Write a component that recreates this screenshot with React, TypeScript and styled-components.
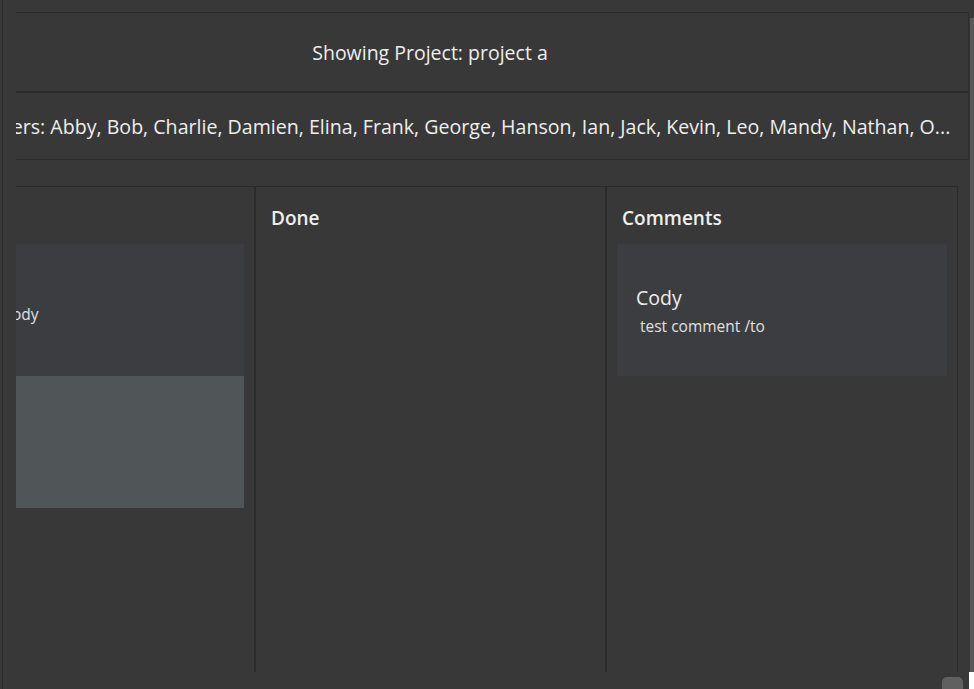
import { useLayoutEffect, useRef } from "react";
import styled, { createGlobalStyle } from "styled-components";

const GlobalStyle = createGlobalStyle`
    html, body {
        margin: 0;
        padding: 0;
        background-color: #383838;
    }
    body {
        font-family: "Open Sans", "Noto Sans", sans-serif;
        color: #eeeeee;
    }
`;

const Window = styled.div`
    width: 974px;
    height: 689px;
    display: grid;
    grid-template-columns: 969px 5px;
    grid-template-rows: 672px 17px;
    background-color: #383838;
    overflow: hidden;
`;

const MainPane = styled.div`
    margin-left: 2px;
    border-left: 1px solid #2b2b2b;
    padding-left: 13px;
    display: flex;
    flex-direction: column;
    min-width: 0;
`;

const ScrollView = styled.div`
    flex: 1;
    overflow: hidden;
    padding-top: 12px;
`;

const Content = styled.div`
    width: 1078px;
    display: flex;
    flex-direction: column;
`;

const ProjectHeader = styled.div`
    box-sizing: border-box;
    height: 80px;
    border: 1px solid #2b2b2b;
    display: flex;
    align-items: center;
    justify-content: center;
    font-size: 19.5px;
    font-weight: 500;
`;

const MembersRow = styled.div`
    box-sizing: border-box;
    height: 68px;
    border: 1px solid #2b2b2b;
    display: flex;
    align-items: center;
    padding-left: 61px;
    font-size: 19.6px;
    font-weight: 500;
    white-space: nowrap;
    overflow: hidden;
`;

const Board = styled.div`
    box-sizing: border-box;
    width: 1067px;
    height: 487px;
    margin-top: 26px;
    border: 1px solid #2b2b2b;
    display: grid;
    grid-template-columns: 364px 351px 1fr;
`;

const Column = styled.section<{ $last?: boolean }>`
    display: flex;
    flex-direction: column;
    padding: 0 10px;
    border-right: ${(p) => (p.$last ? "none" : "2px solid #2b2b2b")};
`;

const ColumnTitle = styled.h2`
    margin: 0;
    padding: 20px 0 15px 5px;
    height: 22px;
    line-height: 22px;
    font-size: 19px;
    font-weight: 600;
    color: #eeeeee;
`;

const Card = styled.div<{ $hover?: boolean }>`
    height: 132px;
    box-sizing: border-box;
    padding: 2px 19px 0;
    display: flex;
    flex-direction: column;
    justify-content: center;
    background-color: ${(p) => (p.$hover ? "#505557" : "#3c3d40")};
`;

const CardTitle = styled.div`
    font-size: 19.5px;
    line-height: 26px;
    color: #eeeeee;
`;

const CardBody = styled.div<{ $solo?: boolean }>`
    padding: ${(p) => (p.$solo ? "6px" : "4px")} 0 0 4px;
    font-size: 15.5px;
    line-height: 22px;
    color: #e0e0e0;
`;

const VBar = styled.div`
    padding: 18px 0 0 1px;
    display: flex;
`;

const VTrack = styled.div`
    flex: 1;
    background-color: #575757;
`;

const HBar = styled.div`
    display: flex;
    justify-content: flex-end;
    padding: 5px 6px 0 0;
    margin-left: 2px;
    border-left: 1px solid #2b2b2b;
`;

const HThumb = styled.div`
    width: 21px;
    height: 16px;
    border-radius: 5px;
    background-color: #606060;
`;

const Corner = styled.div`
    background-color: #ffffff;
`;

const members = [
    "Abby", "Bob", "Charlie", "Damien", "Elina", "Frank", "George", "Hanson",
    "Ian", "Jack", "Kevin", "Leo", "Mandy", "Nathan",
];

const App = () => {
    const scrollRef = useRef<HTMLDivElement>(null);

    useLayoutEffect(() => {
        // the board is scrolled sideways in the screenshot
        if (scrollRef.current) scrollRef.current.scrollLeft = 125;
    }, []);

    return (
        <>
            <GlobalStyle />
            <Window>
                <MainPane>
                    <ScrollView ref={scrollRef}>
                        <Content>
                            <ProjectHeader>Showing Project: project a</ProjectHeader>
                            <MembersRow>Members: {members.join(", ")}, O...</MembersRow>
                            <Board>
                                <Column>
                                    <ColumnTitle>In Progress</ColumnTitle>
                                    <Card>
                                        <CardBody $solo>a test task body</CardBody>
                                    </Card>
                                    <Card $hover />
                                </Column>
                                <Column>
                                    <ColumnTitle>Done</ColumnTitle>
                                </Column>
                                <Column $last>
                                    <ColumnTitle>Comments</ColumnTitle>
                                    <Card>
                                        <CardTitle>Cody</CardTitle>
                                        <CardBody>test comment /to</CardBody>
                                    </Card>
                                </Column>
                            </Board>
                        </Content>
                    </ScrollView>
                </MainPane>
                <VBar>
                    <VTrack />
                </VBar>
                <HBar>
                    <HThumb />
                </HBar>
                <Corner />
            </Window>
        </>
    );
};

export default App;
